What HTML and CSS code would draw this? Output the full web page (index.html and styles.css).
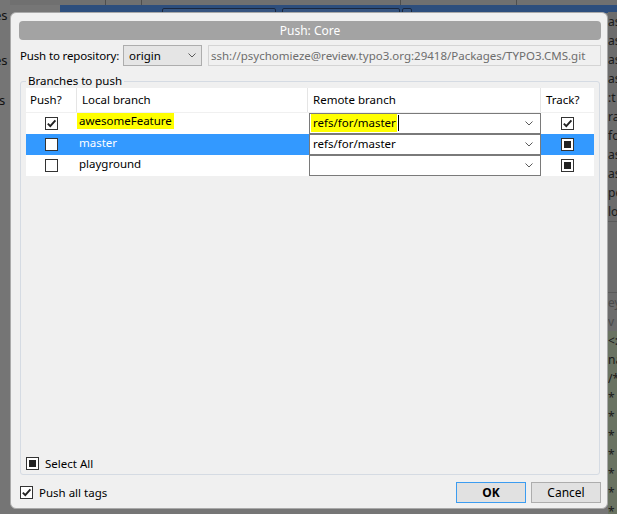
FILE: index.html
```html
<!DOCTYPE html>
<html>
<head>
<meta charset="utf-8">
<link rel="stylesheet" href="styles.css">
</head>
<body>
<div class="desk">
  <div class="desk-top"><span class="vsep vs1"></span><span class="vsep vs2"></span><span class="vsep vs3"></span><span class="vsep vs4"></span></div>
  <div class="desk-band"><span class="pill pl1"></span><span class="pill pl2"></span><span class="pill pl3"></span></div>
  <div class="desk-left">
    <span class="frag">es</span>
    <span class="frag fg2">es</span>
    <span class="frag fg3">s</span>
  </div>
  <div class="desk-right">
    <span class="rfrag">as</span><span class="rfrag">as</span><span class="rfrag">as</span><span class="rfrag">as</span>
    <span class="rfrag">:t</span><span class="rfrag">ra</span><span class="rfrag">fo</span><span class="rfrag">as</span>
    <span class="rfrag">as</span><span class="rfrag">pe</span><span class="rfrag">lo</span>
    <div class="rgap"></div>
    <span class="rfrag dim">ey</span>
    <span class="rfrag dim">v</span>
    <div class="rgreen">
      <span class="rfrag">&lt;:</span><span class="rfrag">na</span><span class="rfrag">/*</span>
      <span class="rfrag">*</span><span class="rfrag">*</span><span class="rfrag">*</span><span class="rfrag">*</span><span class="rfrag">*</span><span class="rfrag">*</span><span class="rfrag">*</span><span class="rfrag">*</span>
    </div>
  </div>
</div>

<div class="dialog">
  <div class="titlebar">Push: Core</div>

  <div class="repo-row">
    <span class="repo-label">Push to repository:</span>
    <div class="repo-combo">
      <span>origin</span>
      <svg class="chev" width="8" height="5" viewBox="0 0 8 5"><polyline points="0.5,0.5 4,4 7.5,0.5" fill="none" stroke="#5a5a5a" stroke-width="1"/></svg>
    </div>
    <div class="url-field">ssh://psychomieze@review.typo3.org:29418/Packages/TYPO3.CMS.git</div>
  </div>

  <fieldset class="group">
    <legend class="group-title">Branches to push</legend>
    <div class="table">
      <div class="thead">
        <div class="th th-first">Push?</div>
        <div class="th">Local branch</div>
        <div class="th">Remote branch</div>
        <div class="th th-last">Track?</div>
      </div>

      <div class="trow">
        <div class="td td-center"><span class="cb"><svg width="11" height="11" viewBox="0 0 11 11"><polyline points="1.8,5.6 4.3,8.2 9.4,2.4" fill="none" stroke="#222" stroke-width="1.9"/></svg></span></div>
        <div class="td td-name"><span class="hl">awesomeFeature</span></div>
        <div class="td td-remote">
          <div class="rcombo"><span class="hl hl-r">refs/for/master</span><span class="caret"></span>
            <svg class="chev rchev" width="8" height="5" viewBox="0 0 8 5"><polyline points="0.5,0.5 4,4 7.5,0.5" fill="none" stroke="#5a5a5a" stroke-width="1"/></svg></div>
        </div>
        <div class="td td-center"><span class="cb"><svg width="11" height="11" viewBox="0 0 11 11"><polyline points="1.8,5.6 4.3,8.2 9.4,2.4" fill="none" stroke="#222" stroke-width="1.9"/></svg></span></div>
      </div>

      <div class="trow selected">
        <div class="td td-center"><span class="cb"></span></div>
        <div class="td td-name"><span class="name">master</span></div>
        <div class="td td-remote">
          <div class="rcombo"><span class="rtext">refs/for/master</span>
            <svg class="chev rchev" width="8" height="5" viewBox="0 0 8 5"><polyline points="0.5,0.5 4,4 7.5,0.5" fill="none" stroke="#5a5a5a" stroke-width="1"/></svg></div>
        </div>
        <div class="td td-center"><span class="cb ind"></span></div>
      </div>

      <div class="trow">
        <div class="td td-center"><span class="cb"></span></div>
        <div class="td td-name"><span class="name">playground</span></div>
        <div class="td td-remote">
          <div class="rcombo">
            <svg class="chev rchev" width="8" height="5" viewBox="0 0 8 5"><polyline points="0.5,0.5 4,4 7.5,0.5" fill="none" stroke="#5a5a5a" stroke-width="1"/></svg></div>
        </div>
        <div class="td td-center"><span class="cb ind"></span></div>
      </div>
    </div>
    <div class="spacer"></div>
    <div class="check-line select-all"><span class="cb ind"></span><span>Select All</span></div>
  </fieldset>

  <div class="footer">
    <div class="check-line tags"><span class="cb"><svg width="11" height="11" viewBox="0 0 11 11"><polyline points="1.8,5.6 4.3,8.2 9.4,2.4" fill="none" stroke="#222" stroke-width="1.9"/></svg></span><span>Push all tags</span></div>
    <div class="buttons">
      <button class="btn btn-default">OK</button>
      <button class="btn">Cancel</button>
    </div>
  </div>
</div>
</body>
</html>
```

FILE: styles.css
```css
html, body {
  margin: 0;
  padding: 0;
}
body {
  width: 617px;
  height: 514px;
  overflow: hidden;
  position: relative;
  background: #767676;
  font-family: "Noto Sans", "Open Sans", sans-serif;
  font-size: 11.5px;
  color: #000;
}

/* ---------- background application (dimmed) ---------- */
.desk { position: absolute; inset: 0; }
.desk-top {
  position: absolute; left: 0; top: 0; width: 617px; height: 5px;
  background: #707070;
}
.vsep { position: absolute; top: 0; width: 1px; height: 5px; background: #4e4e4e; }
.vs1 { left: 105px; } .vs2 { left: 141px; } .vs3 { left: 400px; } .vs4 { left: 516px; }
.desk-band {
  position: absolute; left: 60px; top: 5px; width: 557px; height: 8px;
  background: #2d4e7d;
}
.pill { position: absolute; top: 3px; height: 8px; border: 1px solid #1a2840; border-radius: 2px; background: #36547f; }
.pl1 { left: 102px; width: 112px; } .pl2 { left: 222px; width: 116px; } .pl3 { left: 342px; width: 8px; }
.desk-left {
  position: absolute; left: 0; top: 0; width: 10px; height: 514px;
  background: #757575; overflow: hidden;
}
.frag { position: absolute; left: -6px; top: 6px; color: #111; font-size: 13px; }
.fg2 { top: 51px; }
.fg3 { top: 91px; left: -1px; }
.desk-right {
  position: absolute; left: 608px; top: 12px; width: 9px; height: 502px;
  background: #6c6c6c; overflow: hidden;
  display: flex; flex-direction: column;
}
.rfrag { height: 19px; line-height: 19px; color: #1a1a1a; font-size: 12px; white-space: nowrap; flex: none; }
.rfrag.dim { color: #4a4a4a; }
.rgap { height: 70px; flex: none; border-top: 1px solid #5a5a5a; border-bottom: 1px solid #5a5a5a; }
.rgreen { background: #6a7362; flex: 1; display: flex; flex-direction: column; }

/* ---------- dialog ---------- */
.dialog {
  position: absolute; left: 10px; top: 12px;
  width: 598px; height: 497px;
  box-sizing: border-box;
  background: #f0f0f0;
  border: 1px solid #a9a9a9;
  border-radius: 6px;
  padding: 8px 6px 5px 8px;
  display: flex; flex-direction: column;
}
.titlebar {
  height: 19px; line-height: 19px;
  background: #a3a3a3;
  border-radius: 4px;
  color: #fff;
  text-align: center;
  font-size: 12px;
}

.repo-row {
  margin-top: 5px;
  height: 21px;
  display: flex; align-items: stretch;
}
.repo-label { padding-left: 1px; width: 103px; line-height: 21px; white-space: nowrap; letter-spacing: -0.15px; }
.repo-combo {
  width: 79px; box-sizing: border-box;
  background: #e5e5e5; border: 1px solid #adadad;
  display: flex; align-items: center; justify-content: space-between;
  padding: 0 5px 0 5px;
}
.url-field {
  flex: 1; margin-left: 6px; box-sizing: border-box;
  border: 1px solid #d4d4d4; background: #f0f0f0;
  color: #6d6d6d; line-height: 19px; padding-left: 2px;
  white-space: nowrap; overflow: hidden;
}

.group {
  flex: 1;
  margin: 8px 1px 0 1px;
  padding: 0 4px 4px 5px;
  border: 1px solid #d5dbe3;
  border-radius: 3px;
  min-width: 0;
  display: flex; flex-direction: column;
}
.group-title { padding: 0 2px; line-height: 14px; margin-left: 0; }

.table { width: 568px; }
.thead, .trow {
  display: grid;
  grid-template-columns: 51px 231px 233px 53px;
}
.thead { height: 24px; background: #fff; border-bottom: 1px solid #f0f0f0; }
.th {
  line-height: 24px; padding-left: 5px;
  border-right: 1px solid #e5e5e5; box-sizing: border-box;
}
.th-first { padding-left: 4px; }
.th-last { border-right: none; }

.trow { height: 21px; background: #fff; }
.trow.selected { background: #3399ff; }
.trow.selected .name { color: #fff; }
.td { box-sizing: border-box; }
.td-center { display: flex; align-items: center; justify-content: center; }
.td-name { padding-left: 0; }
.name { display: inline-block; padding: 0 2px; line-height: 17px; }
.hl { display: inline-block; background: #ffff00; padding: 0 2px; line-height: 16px; }

.td-remote { padding-left: 1px; }
.rcombo {
  position: relative;
  height: 21px; box-sizing: border-box;
  width: 232px;
  background: #fff; border: 1px solid #7a7a7a;
  display: flex; align-items: flex-start;
  padding-left: 1px;
}
.rtext { padding-left: 2px; line-height: 18px; }
.hl-r { line-height: 18px; padding-right: 1px; }
.caret { flex: none; width: 1px; height: 16px; background: #000; margin: 1px 0 0 1px; }
.rchev { position: absolute; right: 7px; top: 7px; }

.cb {
  width: 13px; height: 13px; box-sizing: border-box;
  border: 1px solid #333; background: #fff;
  display: inline-flex; align-items: center; justify-content: center;
  flex: none;
}
.cb.ind::after { content: ""; width: 7px; height: 7px; background: #222; }
.cb svg { display: block; }

.spacer { flex: 1; }
.check-line { display: flex; align-items: center; gap: 6px; height: 14px; }
.select-all { margin-left: 0; }

.footer {
  margin-top: 7px; height: 21px;
  display: flex; align-items: center; justify-content: space-between;
}
.tags { margin-left: 1px; }
.buttons { display: flex; gap: 5px; height: 21px; }
.btn {
  width: 70px; height: 21px;
  font: inherit; font-size: 12px; color: #000;
  background: #e1e1e1; border: 1px solid #adadad;
  padding: 0; margin: 0;
}
.btn-default { border-color: #3c9cf0; font-weight: bold; }
```
